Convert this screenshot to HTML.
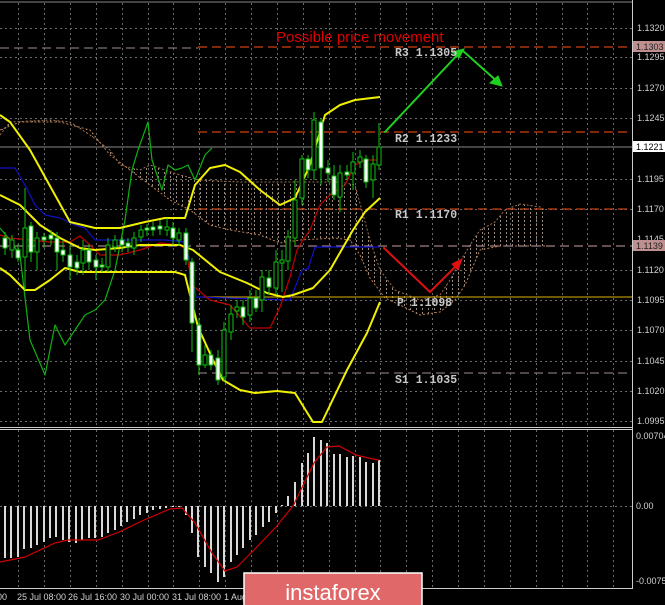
<!DOCTYPE html>
<html><head><meta charset="utf-8"><style>
html,body{margin:0;padding:0;background:#000;width:665px;height:605px;overflow:hidden}
svg{display:block;font-family:"Liberation Sans",sans-serif}
.ax{fill:#d0d0d0;font-size:9px}
.lv{fill:#c8c8c8;font-family:"Liberation Mono",monospace;font-size:11.5px;font-weight:bold}
</style></head><body>
<svg width="665" height="605" viewBox="0 0 665 605" xmlns="http://www.w3.org/2000/svg">
<defs>
<pattern id="vh" width="6" height="4" patternUnits="userSpaceOnUse"><rect x="2" y="0" width="1" height="2" fill="#9a8a80"/></pattern>
</defs>
<rect width="665" height="605" fill="#000"/>
<!-- frame -->
<line x1="0" y1="2" x2="632" y2="2" stroke="#888" stroke-width="1"/>
<line x1="632.5" y1="0" x2="632.5" y2="589" stroke="#ccc"/>
<line x1="0" y1="427.5" x2="632" y2="427.5" stroke="#ccc"/>
<line x1="0" y1="429.5" x2="632" y2="429.5" stroke="#ccc"/>
<line x1="0" y1="588.5" x2="632" y2="588.5" stroke="#ccc"/>
<!-- grid -->
<g stroke="#6a6a6a" stroke-dasharray="2,3" stroke-width="1">
<path d="M18.5 3V427M44.5 3V427M70.5 3V427M96.5 3V427M122.5 3V427M148.5 3V427M173.5 3V427M199.5 3V427M225.5 3V427M251.5 3V427M277.5 3V427M303.5 3V427M329.5 3V427M355.5 3V427M380.5 3V427M406.5 3V427M432.5 3V427M458.5 3V427M484.5 3V427M510.5 3V427M536.5 3V427M562.5 3V427M587.5 3V427M613.5 3V427"/>
<path d="M18.5 430V588M44.5 430V588M70.5 430V588M96.5 430V588M122.5 430V588M148.5 430V588M173.5 430V588M199.5 430V588M225.5 430V588M251.5 430V588M277.5 430V588M303.5 430V588M329.5 430V588M355.5 430V588M380.5 430V588M406.5 430V588M432.5 430V588M458.5 430V588M484.5 430V588M510.5 430V588M536.5 430V588M562.5 430V588M587.5 430V588M613.5 430V588"/>
<path d="M0 28.5H632M0 57.5H632M0 88.5H632M0 118.5H632M0 179.5H632M0 209.5H632M0 270.5H632M0 300.5H632M0 330.5H632M0 361.5H632M0 391.5H632M0 421.5H632M0 506.5H632"/>
</g>
<!-- cloud -->
<polygon fill="url(#vh)" points="0,135 10,122 50,120 70,122 90,135 110,150 120,165 140,170 150,165 180,175 200,180 240,182 300,182 340,182 355,185 370,240 380,270 395,290 420,300 440,295 450,280 460,262 470,245 480,230 495,222 505,210 520,204 540,207 545,210 545,246 500,246 480,250 465,285 455,300 440,312 420,315 400,305 385,298 370,278 360,255 350,240 335,238 300,240 280,243 260,235 230,230 210,225 190,210 170,200 150,185 130,170 110,155 90,130 60,122 20,122 0,130"/>
<polyline fill="none" stroke="#a07050" stroke-dasharray="2,2" points="0,135 10,122 50,120 70,122 90,135 110,150 120,165 140,170 150,165 180,175 200,180 240,182 300,182 340,182 355,185 370,240 380,270 395,290 420,300 440,295 450,280 460,262 470,245 480,230 495,222 505,210 520,204 540,207 545,210"/>
<polyline fill="none" stroke="#c08050" stroke-dasharray="2,2" points="0,130 20,122 60,122 90,130 110,155 130,170 150,185 170,200 190,210 210,225 230,230 260,235 280,243 300,240 335,238 350,240 360,255 370,278 385,298 400,305 420,315 440,312 455,300 465,285 480,250 500,246 545,246"/>
<!-- levels -->
<g stroke-width="1.3" fill="none">
<line x1="0" y1="48" x2="198" y2="48" stroke="#807070" stroke-dasharray="9,5"/>
<line x1="198" y1="47" x2="632" y2="47" stroke="#d04010" stroke-dasharray="9,5"/>
<line x1="198" y1="132" x2="632" y2="132" stroke="#d04010" stroke-dasharray="9,5"/>
<line x1="0" y1="147" x2="632" y2="147" stroke="#8a8a8a" stroke-width="1"/>
<line x1="198" y1="209" x2="632" y2="209" stroke="#c04010" stroke-dasharray="9,5"/>
<line x1="0" y1="246" x2="632" y2="246" stroke="#a08080" stroke-dasharray="9,5"/>
<line x1="198" y1="297" x2="632" y2="297" stroke="#e0b000" stroke-width="1"/>
<line x1="198" y1="373" x2="632" y2="373" stroke="#807070" stroke-dasharray="9,5"/>
</g>
<!-- indicator lines -->
<g fill="none" stroke-linejoin="round">
<polyline stroke="#1010c8" stroke-width="1.2" points="0,168 15,168 25,185 35,205 45,215 60,218 75,225 85,228 95,240 130,240 165,240 185,242 190,262 196,297 290,300 302,270 308,269 315,247 380,247"/>
<polyline stroke="#c00000" stroke-width="1.2" points="0,235 10,238 30,240 50,242 70,242 80,236 90,245 100,255 120,255 140,250 160,243 180,245 186,250 192,285 210,300 230,305 250,328 270,328 280,307 290,277 297,250 303,240 310,230 320,205 330,195 345,185 355,165 365,160 380,160"/>
<polyline stroke="#10b010" stroke-width="1.2" points="0,228 10,240 20,255 30,340 45,375 55,325 65,345 75,330 85,315 95,310 105,300 115,270 125,220 132,170 138,150 148,122 152,160 162,190 168,165 175,170 182,168 188,165 195,180 205,155 212,148"/>
<polyline stroke="#f0f000" stroke-width="2" points="0,115 10,122 30,150 55,195 70,222 95,228 120,228 145,222 165,218 185,218 195,185 210,168 225,165 240,172 260,190 280,205 295,198 310,165 325,115 340,105 355,100 380,97"/>
<polyline stroke="#f0f000" stroke-width="2" points="0,195 20,205 40,225 60,238 80,248 95,250 120,248 140,245 170,245 180,245 193,250 220,272 247,283 267,293 283,297 293,295 313,288 330,270 353,230 365,212 380,198"/>
<polyline stroke="#f0f000" stroke-width="2" points="0,268 10,275 25,290 35,290 50,280 65,268 80,272 120,272 175,272 185,275 198,327 213,360 223,380 240,390 255,393 277,391 295,393 313,422 322,422 347,370 367,333 380,302"/>
</g>
<!-- candles -->
<g stroke="#10c010" stroke-width="1">
<path d="M5 232V255M12 235V258M18 244V262M25 188V290M31 222V262M37 232V270M44 233V248M51 230V245M57 232V270M63 240V262M70 245V280M77 255V275M83 240V275M89 244V270M96 255V280M102 258V272M108 238V272M115 235V252M122 235V252M128 238V252M134 232V255M141 225V242M147 224V236M153 222V236M160 220V235M167 218V236M173 222V245M179 228V246M186 228V265M192 258V352M199 318V375M205 345V368M211 350V370M218 350V385M224 322V382M231 305V340M237 300V318M243 300V325M250 290V322M256 290V312M262 270V312M269 270V295M276 250V295M282 250V292M288 230V270M295 180V245M302 155V205M308 155V178M314 112V180M321 118V185M328 160V182M334 165V200M340 165V212M347 165V180M353 152V190M360 150V168M366 155V188M373 155V198M379 123V170"/>
</g>
<g stroke="#10c010" stroke-width="1" fill="#000">
<rect x="10" y="240" width="4" height="10"/><rect x="23" y="228" width="4" height="29"/><rect x="35" y="238" width="4" height="14"/><rect x="81" y="250" width="4" height="13"/><rect x="106" y="245" width="4" height="22"/><rect x="113" y="240" width="4" height="7"/><rect x="132" y="238" width="4" height="10"/><rect x="139" y="230" width="4" height="7"/><rect x="165" y="227" width="4" height="3"/><rect x="177" y="233" width="4" height="7"/><rect x="203" y="355" width="4" height="10"/><rect x="222" y="330" width="4" height="47"/><rect x="229" y="314" width="4" height="18"/><rect x="235" y="307" width="4" height="4"/><rect x="248" y="298" width="4" height="17"/><rect x="260" y="277" width="4" height="23"/><rect x="274" y="262" width="4" height="26"/><rect x="280" y="260" width="4" height="3"/><rect x="286" y="237" width="4" height="24"/><rect x="293" y="200" width="4" height="38"/><rect x="300" y="159" width="4" height="39"/><rect x="312" y="120" width="4" height="50"/><rect x="338" y="173" width="4" height="24"/><rect x="351" y="162" width="4" height="11"/><rect x="358" y="157" width="4" height="5"/><rect x="371" y="164" width="4" height="16"/><rect x="377" y="147" width="4" height="18"/>
</g>
<g stroke="#10c010" stroke-width="1" fill="#fff">
<rect x="3" y="238" width="4" height="10"/><rect x="16" y="250" width="4" height="8"/><rect x="29" y="226" width="4" height="26"/><rect x="42" y="237" width="4" height="3"/><rect x="49" y="235" width="4" height="4"/><rect x="55" y="238" width="4" height="14"/><rect x="61" y="250" width="4" height="5"/><rect x="68" y="255" width="4" height="12"/><rect x="75" y="262" width="4" height="6"/><rect x="87" y="250" width="4" height="12"/><rect x="94" y="260" width="4" height="7"/><rect x="100" y="265" width="4" height="2"/><rect x="120" y="240" width="4" height="5"/><rect x="126" y="243" width="4" height="4"/><rect x="145" y="228" width="4" height="2"/><rect x="151" y="227" width="4" height="3"/><rect x="158" y="226" width="4" height="3"/><rect x="171" y="228" width="4" height="10"/><rect x="184" y="233" width="4" height="27"/><rect x="190" y="262" width="4" height="61"/><rect x="197" y="325" width="4" height="40"/><rect x="209" y="355" width="4" height="10"/><rect x="216" y="358" width="4" height="22"/><rect x="241" y="307" width="4" height="10"/><rect x="254" y="298" width="4" height="10"/><rect x="267" y="278" width="4" height="9"/><rect x="306" y="159" width="4" height="11"/><rect x="319" y="122" width="4" height="46"/><rect x="326" y="168" width="4" height="5"/><rect x="332" y="176" width="4" height="19"/><rect x="345" y="172" width="4" height="3"/><rect x="364" y="159" width="4" height="23"/>
</g>
<!-- arrows -->
<g stroke-width="2" fill="none" stroke-linecap="round">
<polyline stroke="#20d020" points="385,132 462,50 500,84"/>
<polygon stroke="#20d020" fill="#20d020" stroke-width="1" points="502,86 490,83 498,76"/>
<polygon stroke="#20d020" fill="#20d020" stroke-width="1" points="464,49 452,52 459,58"/>
<polyline stroke="#e01010" points="384,248 430,292 460,262"/>
<polygon stroke="#e01010" fill="#e01010" stroke-width="1" points="462,259 458,270 452,264"/>
</g>
<!-- labels -->
<text x="276" y="42" fill="#e00000" font-size="15">Possible price movement</text>
<text class="lv" x="395" y="56">R3 1.1305</text>
<text class="lv" x="395" y="142">R2 1.1233</text>
<text class="lv" x="395" y="218">R1 1.1170</text>
<text class="lv" x="397" y="306">P 1.1098</text>
<text class="lv" x="395" y="383">S1 1.1035</text>
<!-- right axis -->
<g class="ax">
<text x="637" y="31">1.1320</text><text x="637" y="60">1.1295</text><text x="637" y="91">1.1270</text><text x="637" y="121">1.1245</text><text x="637" y="182">1.1195</text><text x="637" y="212">1.1170</text><text x="637" y="242">1.1145</text><text x="637" y="273">1.1120</text><text x="637" y="303">1.1095</text><text x="637" y="333">1.1070</text><text x="637" y="364">1.1045</text><text x="637" y="394">1.1020</text><text x="637" y="424">1.0995</text>
<text x="636" y="439">0.00704</text><text x="636" y="509">0.00</text><text x="636" y="584">-0.00759</text>
</g>
<rect x="633" y="41" width="32" height="11" fill="#c09090"/><text x="636" y="50" font-size="9" fill="#222">1.1303</text>
<rect x="633" y="141" width="32" height="11" fill="#fff"/><text x="636" y="150" font-size="9" fill="#000">1.1221</text>
<rect x="633" y="240" width="32" height="11" fill="#c09090"/><text x="636" y="249" font-size="9" fill="#222">1.1139</text>
<!-- MACD -->
<g stroke="#d8d8d8" stroke-width="2">
<path d="M5 506V558M11 506V558M18 506V557M24 506V549M31 506V548M37 506V545M44 506V542M50 506V538M56 506V537M63 506V540M69 506V542M76 506V543M82 506V540M89 506V538M95 506V538M102 506V537M108 506V533M115 506V530M121 506V526M127 506V522M134 506V519M140 506V515M147 506V513M153 506V510M160 506V509M166 506V508M173 506V507M179 506V507M186 506V515M192 506V533M198 506V557M205 506V567M211 506V573M218 506V582M224 506V577M231 506V562M237 506V555M243 506V548M250 506V540M256 506V535M263 506V527M269 506V522M276 506V513M282 506V505M288 506V496M295 506V482M302 506V463M308 506V453M314 506V437M321 506V440M327 506V443M334 506V454M340 506V454M347 506V457M353 506V456M360 506V457M366 506V462M373 506V463M379 506V460"/>
</g>
<polyline fill="none" stroke="#d00000" stroke-width="1.2" points="0,562 25,557 55,543 68,540 98,540 119,532 144,520 170,509 182,508 195,523 212,553 225,571 237,567 254,550 276,527 293,506 314,463 327,447 339,446 356,455 373,459 379,460"/>
<!-- time axis -->
<g class="ax" font-size="9">
<text x="-3" y="600">00</text><text x="17" y="600">25 Jul 08:00</text><text x="68" y="600">26 Jul 16:00</text><text x="120" y="600">30 Jul 00:00</text><text x="172" y="600">31 Jul 08:00</text><text x="224" y="600">1 Aug</text>
</g>
<!-- logo -->
<rect x="244" y="573" width="178" height="34" fill="#e06868" stroke="#fff" stroke-width="1.5"/>
<text x="333" y="600" text-anchor="middle" fill="#fff" font-size="22">instaforex</text>
</svg>
</body></html>
